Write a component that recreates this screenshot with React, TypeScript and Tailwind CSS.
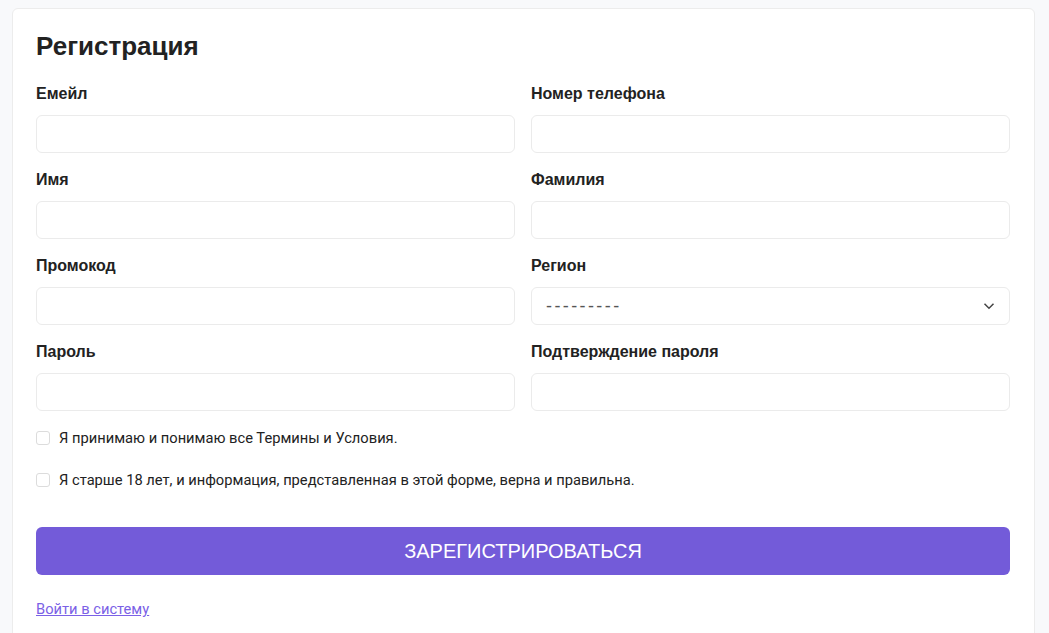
import { useState } from 'react';

const fields: ReadonlyArray<{ left: string; right: string; select?: boolean; password?: boolean }> = [
  { left: 'Емейл', right: 'Номер телефона' },
  { left: 'Имя', right: 'Фамилия' },
  { left: 'Промокод', right: 'Регион', select: true },
  { left: 'Пароль', right: 'Подтверждение пароля', password: true },
];

const inputClass =
  'block w-full h-[38px] rounded-md border border-[#ebebeb] bg-white px-[14px] text-[16px] text-[#444] outline-none';

function Field({ label, children }: { label: string; children: React.ReactNode }): React.ReactElement {
  return (
    <div className="pb-[15px]">
      <label className="block h-6 leading-6 text-[16px] font-bold text-[#222]">{label}</label>
      <div className="mt-[9px]">{children}</div>
    </div>
  );
}

function Check({ text }: { text: string }): React.ReactElement {
  const [checked, setChecked] = useState(false);
  return (
    <label className="flex items-center gap-[9px] h-5 cursor-pointer">
      <input
        type="checkbox"
        checked={checked}
        onChange={(e) => setChecked(e.target.checked)}
        className="appearance-none w-[14px] h-[14px] rounded-[3px] border border-[#dcdcdc] bg-white shrink-0"
      />
      <span className="text-[14.7px] text-[#222] font-['Roboto',sans-serif]">{text}</span>
    </label>
  );
}

export default function App(): React.ReactElement {
  return (
    <div className="min-h-screen bg-[#f8f9fb] pt-2 pl-3 pr-[14px] font-['Liberation_Sans',Arial,sans-serif]">
      <div className="bg-white border border-[#ececec] rounded-md pl-[23px] pr-6 pt-6 pb-10 min-h-[640px]">
        <h1 className="text-[26px] leading-8 font-bold text-[#222] -mt-[3px]">Регистрация</h1>

        <div className="grid grid-cols-2 gap-x-4 mt-5">
          {fields.map((f) => (
            <div key={f.left} className="contents">
              <Field label={f.left}>
                <input type={f.password ? 'password' : 'text'} className={inputClass} />
              </Field>
              <Field label={f.right}>
                {f.select ? (
                  <div className="relative">
                    <select
                      className={`${inputClass} appearance-none text-[18px] tracking-[2.4px] text-[#555]`}
                      defaultValue=""
                    >
                      <option value="">---------</option>
                    </select>
                    <svg
                      className="absolute right-[15px] top-1/2 -translate-y-1/2 pointer-events-none"
                      width="12"
                      height="8"
                      viewBox="0 0 12 8"
                      fill="none"
                      stroke="#444"
                      strokeWidth="1.5"
                    >
                      <path d="M1.5 1.8 6 6.2l4.5-4.4" />
                    </svg>
                  </div>
                ) : (
                  <input type={f.password ? 'password' : 'text'} className={inputClass} />
                )}
              </Field>
            </div>
          ))}
        </div>

        <div className="mt-[2px] flex flex-col gap-[22px]">
          <Check text="Я принимаю и понимаю все Термины и Условия." />
          <Check text="Я старше 18 лет, и информация, представленная в этой форме, верна и правильна." />
        </div>

        <button
          type="button"
          className="mt-[37px] w-full h-12 rounded-md bg-[#735bd9] text-white text-[20px] uppercase"
        >
          Зарегистрироваться
        </button>

        <div className="mt-6 h-5 leading-5">
          <a href="#" className="text-[14.7px] text-[#7b61e6] underline font-['Roboto',sans-serif]">
            Войти в систему
          </a>
        </div>
      </div>
    </div>
  );
}
